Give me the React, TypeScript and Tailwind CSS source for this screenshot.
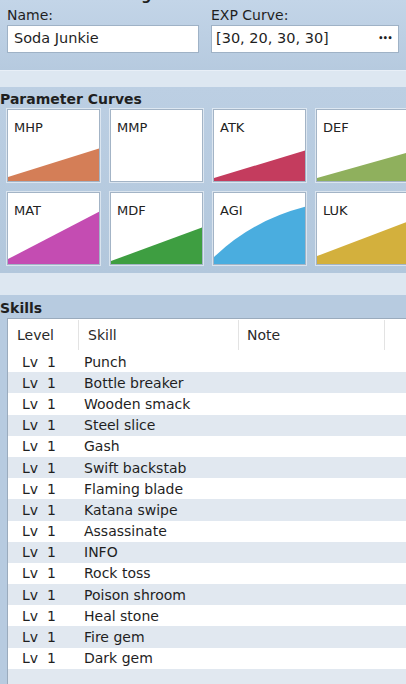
import React from "react";

type Curve = { label: string; color: string; d?: string };

const curves: Curve[] = [
    { label: "MHP", color: "#d47e57", d: "M0,72 L0,68 L92,39 L92,72 Z" },
    { label: "MMP", color: "#ffffff" },
    { label: "ATK", color: "#c43c5e", d: "M0,72 L0,69 L92,41 L92,72 Z" },
    { label: "DEF", color: "#8fb05d", d: "M0,72 L0,69 L92,43 L92,72 Z" },
    { label: "MAT", color: "#c44cb2", d: "M0,72 L0,67 L92,19 L92,72 Z" },
    { label: "MDF", color: "#3e9e41", d: "M0,72 L0,69 L92,35 L92,72 Z" },
    { label: "AGI", color: "#4aaddf", d: "M0,72 L0,65 Q38,28 92,14 L92,72 Z" },
    { label: "LUK", color: "#d3b03d", d: "M0,72 L0,64 L92,29 L92,72 Z" },
];

const skills = [
    "Punch",
    "Bottle breaker",
    "Wooden smack",
    "Steel slice",
    "Gash",
    "Swift backstab",
    "Flaming blade",
    "Katana swipe",
    "Assassinate",
    "INFO",
    "Rock toss",
    "Poison shroom",
    "Heal stone",
    "Fire gem",
    "Dark gem",
];

function CurveCard({ curve }: { curve: Curve }) {
    return (
        <div className="relative h-[73px] w-[93px] border border-[#a3b4c6] bg-white shadow-[0_0_0_1px_rgba(255,255,255,0.5)]">
            {curve.d && (
                <svg
                    className="absolute inset-0 h-full w-full"
                    viewBox="0 0 92 72"
                    preserveAspectRatio="none"
                >
                    <path d={curve.d} fill={curve.color} />
                </svg>
            )}
            <span className="relative block pl-[6px] pt-[10px] text-[13px] leading-[15px] text-[#222]">
                {curve.label}
            </span>
        </div>
    );
}

export default function App() {
    return (
        <div className="h-[684px] w-[406px] overflow-hidden bg-[#dde7f1] font-['DejaVu_Sans',sans-serif] text-[#1f1f1f]">
            {/* general settings */}
            <section className="h-[70px] overflow-hidden bg-gradient-to-b from-[#c3d5e8] to-[#b6cadf] px-[7px]">
                <div className="h-[5px] overflow-hidden">
                    <div className="-mt-[13px] pl-[20px] text-[14px] font-bold leading-[16px]">
                        General Settings
                    </div>
                </div>
                <div className="grid grid-cols-[192px_1fr] gap-x-[12px]">
                    <div>
                        <p className="h-[20px] pt-[2px] text-[14px] leading-[16px]">Name:</p>
                        <div className="flex h-[28px] items-center border border-[#9fb2c6] bg-white px-[6px] text-[14.5px]">
                            Soda Junkie
                        </div>
                    </div>
                    <div>
                        <p className="h-[20px] pt-[2px] text-[14px] leading-[16px]">EXP Curve:</p>
                        <div className="flex h-[28px] items-center justify-between border border-[#9fb2c6] bg-white pl-[4px] pr-[6px] text-[14.5px]">
                            <span>[30, 20, 30, 30]</span>
                            <span className="text-[8px] font-bold tracking-[-0.5px]">•••</span>
                        </div>
                    </div>
                </div>
            </section>

            <div className="h-[17px] border-t border-[#e8eff7] bg-[#dde7f1]" />

            {/* parameter curves */}
            <section className="h-[186px] bg-gradient-to-b from-[#bccfe3] to-[#b2c7dc]">
                <h2 className="h-[22px] pt-[4px] text-[14px] font-bold leading-[16px]">
                    Parameter Curves
                </h2>
                <div className="grid grid-cols-[repeat(4,93px)] gap-x-[10px] gap-y-[10px] pl-[7px]">
                    {curves.map((c) => (
                        <CurveCard key={c.label} curve={c} />
                    ))}
                </div>
            </section>

            <div className="h-[22px] bg-[#dde7f1]" />

            {/* skills */}
            <section className="h-[389px] bg-[#b7cbe0]">
                <h2 className="h-[23px] pt-[5px] text-[14px] font-bold leading-[16px]">Skills</h2>
                <div className="ml-[7px] h-full border-l border-t border-[#9aabbd] bg-white text-[14px]">
                    <div className="flex h-[32px] items-center text-[#2a2a2a]">
                        <div className="flex h-[30px] w-[71px] items-center border-r border-[#e3e3e3] pl-[9px]">
                            Level
                        </div>
                        <div className="flex h-[30px] w-[160px] items-center border-r border-[#e3e3e3] pl-[9px]">
                            Skill
                        </div>
                        <div className="flex h-[30px] w-[146px] items-center border-r border-[#e3e3e3] pl-[8px]">
                            Note
                        </div>
                    </div>
                    {[...skills, ""].map((s, i) => (
                        <div
                            key={i}
                            className={`flex h-[21.2px] items-center leading-[16px] ${
                                i % 2 === 1 ? "bg-[#e1e8f0]" : "bg-white"
                            }`}
                        >
                            {s && (
                                <>
                                    <div className="flex w-[71px] pl-[14px]">
                                        <span className="w-[25px]">Lv</span>
                                        <span>1</span>
                                    </div>
                                    <div className="pl-[5px]">{s}</div>
                                </>
                            )}
                        </div>
                    ))}
                </div>
            </section>
        </div>
    );
}
